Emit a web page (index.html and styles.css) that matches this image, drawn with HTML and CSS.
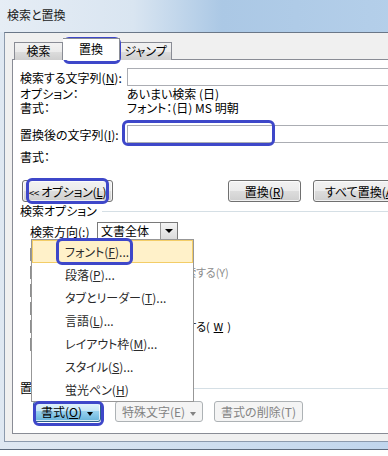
FILE: index.html
```html
<!DOCTYPE html>
<html lang="ja">
<head>
    <meta charset="UTF-8">
    <title>検索と置換</title>
    <link rel="stylesheet" href="styles.css">
</head>
<body>
    <div class="window">
        <div class="titlebar">検索と置換</div>
        <div class="client">
            <div class="tabs">
                <div class="tab tab-find">検索</div>
                <div class="tab tab-replace active">置換</div>
                <div class="tab tab-jump">ジャンプ</div>
            </div>
            <div class="panel">
                <div class="field-row row-find">
                    <span class="label">検索する文字列(<u>N</u>):</span>
                    <div class="textbox"></div>
                </div>
                <div class="info-row row-option">
                    <span class="label">オプション：</span>
                    <span>あいまい検索 (日)</span>
                </div>
                <div class="info-row">
                    <span class="label">書式：</span>
                    <span>フォント：(日) MS 明朝</span>
                </div>
                <div class="field-row row-replace">
                    <span class="label">置換後の文字列(<u>I</u>):</span>
                    <div class="textbox"></div>
                </div>
                <div class="info-row row-format">
                    <span class="label">書式：</span>
                </div>
                <div class="button-row">
                    <button class="btn options-btn"><span class="chevrons">&lt;&lt;</span> オプション(<u>L</u>)</button>
                    <button class="btn replace-btn">置換(<u>R</u>)</button>
                    <button class="btn replace-all-btn">すべて置換(<u>A</u>)</button>
                </div>
                <div class="group-title">検索オプション</div>
                <div class="direction-row">
                    <span class="direction-label">検索方向(<u>:</u>)</span>
                    <div class="combo">
                        <span class="combo-text">文書全体</span>
                        <span class="combo-btn"><span class="arrow"></span></span>
                    </div>
                </div>
                <div class="checks">
                    <div class="check tight"><span class="box"></span>大文字と小文字を区別する(<u>H</u>)</div>
                    <div class="check disabled"><span class="box"></span>完全に一致する単語だけを検索する(Y)</div>
                    <div class="check"><span class="box"></span>ワイルドカードを使用する(<u>U</u>)</div>
                    <div class="check"><span class="box"></span>あいまい検索 (英)(<u>K</u>)</div>
                    <div class="check"><span class="box"></span>英単語の異なる活用形も検索する(<u>W</u>)</div>
                    <div class="check"><span class="box"></span>あいまい検索 (日)(<u>J</u>)</div>
                </div>
                <div class="group-title replace-group">置換</div>
                <div class="button-row bottom-row">
                    <button class="btn pressed format-btn">書式(<u>O</u>)<span class="arrow"></span></button>
                    <button class="btn special-btn" disabled>特殊文字(E)<span class="arrow"></span></button>
                    <button class="btn clear-btn" disabled>書式の削除(T)</button>
                </div>
            </div>
        </div>

        <div class="menu">
            <div class="menu-item hover">フォント(<u>F</u>)...</div>
            <div class="menu-item">段落(<u>P</u>)...</div>
            <div class="menu-item">タブとリーダー(<u>T</u>)...</div>
            <div class="menu-item">言語(<u>L</u>)...</div>
            <div class="menu-item">レイアウト枠(<u>M</u>)...</div>
            <div class="menu-item">スタイル(<u>S</u>)...</div>
            <div class="menu-item">蛍光ペン(<u>H</u>)</div>
        </div>

        <div class="mark mark-tab"></div>
        <div class="mark mark-input"></div>
        <div class="mark mark-options"></div>
        <div class="mark mark-font"></div>
        <div class="mark mark-format"></div>
    </div>
</body>
</html>
```

FILE: styles.css
```css
body {
    margin: 0;
    width: 388px;
    height: 456px;
    overflow: hidden;
    background: #fff;
    font-family: "Noto Sans CJK JP", "Noto Sans", sans-serif;
    font-size: 12px;
    color: #000;
    font-feature-settings: "palt";
}

u {
    text-decoration-thickness: 1px;
    text-underline-offset: 1px;
}

.window {
    position: relative;
    width: 440px;
    padding: 0 0 7px 4px;
    background: linear-gradient(to right, #dfe8f2, #bcd3ec);
    border-bottom: 1px solid #5d6b7d;
}

.titlebar {
    height: 32px;
    line-height: 30px;
    margin-left: -4px;
    padding-left: 7px;
    background: linear-gradient(to right, #e6edf5 0%, #d9e5f1 30%, #abc8e5 50%, #b7d1eb 100%);
    color: #1a1a1a;
}

.client {
    height: 408px;
    background: #f0f0f0;
    border-top: 1px solid #6a7788;
    border-left: 1px solid #8c9aad;
    border-bottom: 1px solid #8c9aad;
}

/* tabs */
.tabs {
    display: flex;
    align-items: flex-end;
    height: 27px;
    padding-left: 9px;
}

.tab {
    box-sizing: border-box;
    height: 18px;
    line-height: 16px;
    text-align: center;
    border: 1px solid #898c95;
    border-bottom: 0;
    background: linear-gradient(#f2f2f2, #ebebeb 50%, #dddddd 50%, #cfcfcf);
}

.tab-find {
    width: 49px;
}

.tab-replace {
    width: 57px;
}

.tab-jump {
    width: 52px;
    border-left: 0;
}

.tab.active {
    position: relative;
    z-index: 1;
    height: 22px;
    line-height: 20px;
    background: #fff;
    border-left: 0;
}

.panel {
    box-sizing: border-box;
    height: 375px;
    margin: -1px 0 0 7px;
    padding-left: 7px;
    background: #fff;
    border: 1px solid #898c95;
}

/* rows */
.field-row {
    display: flex;
    align-items: center;
    height: 18px;
}

.row-find {
    margin-top: 8px;
}

.row-replace {
    margin-top: 10px;
}

.label {
    flex: none;
    width: 107px;
}

.textbox {
    flex: 1;
    box-sizing: border-box;
    height: 18px;
    border: 1px solid #abadb3;
    background: #fff;
}

.info-row {
    display: flex;
    height: 14px;
    line-height: 14px;
}

.row-option {
    margin-top: 1px;
}

.row-format {
    margin-top: 7px;
}

/* buttons */
.button-row {
    display: flex;
    margin-top: 16px;
}

.btn {
    box-sizing: border-box;
    height: 22px;
    padding: 0;
    font: inherit;
    color: #000;
    white-space: nowrap;
    border: 1px solid #707070;
    border-radius: 3px;
    background: linear-gradient(#f2f2f2, #ebebeb 50%, #dddddd 50%, #cfcfcf);
    box-shadow: inset 0 0 0 1px rgba(255, 255, 255, 0.7);
}

.btn:disabled {
    color: #838383;
    border-color: #adb2b5;
    background: #f4f4f4;
    box-shadow: none;
}

.btn.pressed {
    border-color: #2c628b;
    background: linear-gradient(#e5f4fc, #c4e5f6 50%, #98d1ef 50%, #68b3db);
}

.options-btn {
    width: 91px;
    margin-left: 2px;
    letter-spacing: -0.3px;
}

.chevrons {
    font-size: 10px;
    letter-spacing: -0.5px;
}

.replace-btn {
    width: 73px;
    margin-left: 115px;
}

.replace-all-btn {
    width: 96px;
    margin-left: 12px;
}

.arrow {
    display: inline-block;
    width: 0;
    height: 0;
    margin-left: 5px;
    vertical-align: middle;
    border-left: 3px solid transparent;
    border-right: 3px solid transparent;
    border-top: 4px solid currentColor;
}

.bottom-row {
    margin-top: 6px;
}

.bottom-row .btn {
    height: 21px;
}

.format-btn {
    width: 68px;
    margin-left: 13px;
}

.special-btn {
    width: 88px;
    margin-left: 14px;
}

.clear-btn {
    width: 89px;
    margin-left: 11px;
}

/* search options */
.group-title {
    display: flex;
    align-items: center;
    gap: 5px;
    height: 14px;
    line-height: 14px;
    margin-top: 2px;
}

.group-title::after {
    content: "";
    flex: 1;
    height: 1px;
    background: #d5dfe5;
}

.replace-group {
    margin-top: 28px;
}

.direction-row {
    display: flex;
    align-items: center;
    height: 18px;
    margin-top: 4px;
    padding-left: 10px;
}

.direction-label {
    flex: none;
    width: 67px;
}

.combo {
    display: flex;
    box-sizing: border-box;
    width: 81px;
    height: 18px;
    border: 1px solid #7a7a7a;
    background: #fff;
}

.combo-text {
    flex: 1;
    padding-left: 3px;
    line-height: 16px;
}

.combo-btn {
    display: flex;
    align-items: center;
    justify-content: center;
    width: 16px;
    border-left: 1px solid #9a9a9a;
    background: linear-gradient(#f4f4f4, #dcdcdc);
}

.combo-btn .arrow {
    margin: 0;
    border-left-width: 4px;
    border-right-width: 4px;
    border-top-width: 4px;
}

.checks {
    margin-top: 5px;
}

.check {
    display: flex;
    align-items: center;
    gap: 4px;
    height: 18px;
    padding-left: 10px;
    font-size: 11px;
    letter-spacing: -0.1px;
    white-space: nowrap;
}

.check.tight {
    letter-spacing: -0.6px;
}

.check.disabled {
    color: #8d8d8d;
}

.box {
    flex: none;
    box-sizing: border-box;
    width: 13px;
    height: 13px;
    border: 1px solid #8e8f8f;
    background: linear-gradient(135deg, #dcdcdc, #fff);
}

/* dropdown menu */
.menu {
    position: absolute;
    left: 31px;
    top: 239px;
    box-sizing: border-box;
    width: 163px;
    border: 1px solid #979797;
    background: #fff;
}

.menu-item {
    box-sizing: border-box;
    height: 23px;
    line-height: 23px;
    padding-left: 33px;
    color: #2a2a2a;
    white-space: nowrap;
}

.menu-item.hover {
    line-height: 21px;
    padding-left: 32px;
    background: #fff1c9;
    border: 1px solid #f3cd67;
}

/* annotation marks */
.mark {
    position: absolute;
    box-sizing: border-box;
    border: 3px solid #3e47c9;
    border-radius: 6px;
}

.mark-tab {
    left: 63px;
    top: 37px;
    width: 58px;
    height: 27px;
}

.mark-input {
    left: 122px;
    top: 120px;
    width: 153px;
    height: 26px;
}

.mark-options {
    left: 26px;
    top: 178px;
    width: 83px;
    height: 26px;
}

.mark-font {
    left: 56px;
    top: 238px;
    width: 77px;
    height: 27px;
}

.mark-format {
    left: 33px;
    top: 401px;
    width: 71px;
    height: 25px;
}
```
